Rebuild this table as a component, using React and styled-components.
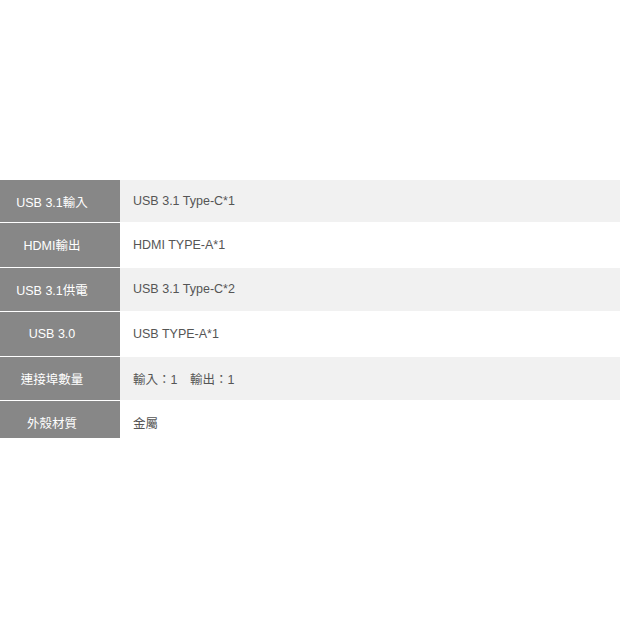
import React from 'react';
import styled, { createGlobalStyle } from 'styled-components';

const specs = [
  { label: 'USB 3.1輸入', value: 'USB 3.1 Type-C*1' },
  { label: 'HDMI輸出', value: 'HDMI TYPE-A*1' },
  { label: 'USB 3.1供電', value: 'USB 3.1 Type-C*2' },
  { label: 'USB 3.0', value: 'USB TYPE-A*1' },
  { label: '連接埠數量', value: '輸入：1　輸出：1' },
  { label: '外殼材質', value: '金屬' },
];

const GlobalStyle = createGlobalStyle`
  html, body {
    margin: 0;
    padding: 0;
    background: #fff;
  }
  body {
    font-family: "Liberation Sans", Arial, "Noto Sans CJK TC", sans-serif;
  }
`;

const Page = styled.div`
  width: 620px;
  height: 620px;
  padding-top: 180px;
  box-sizing: border-box;
`;

const Table = styled.div`
  display: flex;
  flex-direction: column;
  gap: 1px;
  height: 258px;
  overflow: hidden;
`;

const Row = styled.div`
  display: grid;
  grid-template-columns: 120px 1fr;
  flex: none;
  height: ${({ $first }) => ($first ? '42px' : '43.5px')};
`;

const Label = styled.div`
  display: flex;
  align-items: center;
  justify-content: center;
  padding-right: 16px;
  background: #878787;
  color: #fff;
  font-size: 12.5px;
`;

const Value = styled.div`
  display: flex;
  align-items: center;
  padding-left: 13px;
  background: ${({ $shade }) => ($shade ? '#f1f1f1' : '#fff')};
  color: #555;
  font-size: 12.5px;
  white-space: pre;
`;

export default function App() {
  return (
    <Page>
      <GlobalStyle />
      <Table>
        {specs.map((s, i) => (
          <Row key={s.label} $first={i === 0}>
            <Label>{s.label}</Label>
            <Value $shade={i % 2 === 0}>{s.value}</Value>
          </Row>
        ))}
      </Table>
    </Page>
  );
}
